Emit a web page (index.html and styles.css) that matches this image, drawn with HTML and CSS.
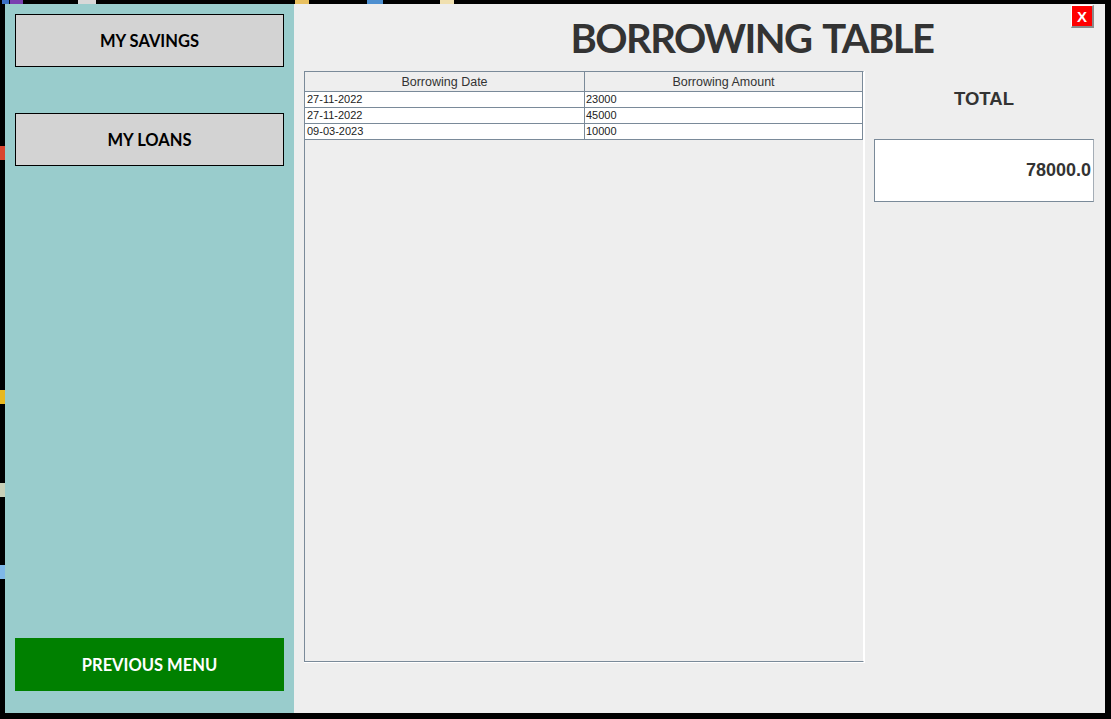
FILE: index.html
```html
<!DOCTYPE html>
<html>
<head>
<meta charset="utf-8">
<link rel="stylesheet" href="styles.css">
</head>
<body>
<div class="desktop">
  <span class="frag f1"></span><span class="frag f2"></span><span class="frag f3"></span>
  <span class="frag f4"></span><span class="frag f5"></span><span class="frag f6"></span>
  <span class="frag f7"></span><span class="frag f8"></span><span class="frag f9"></span>
  <span class="frag f10"></span>
</div>
<div class="window">
  <aside class="sidebar">
    <div class="btn nav">MY SAVINGS</div>
    <div class="btn nav loans">MY LOANS</div>
    <div class="btn prev">PREVIOUS MENU</div>
  </aside>
  <main class="main">
    <header class="header">
      <h1 class="title">BORROWING TABLE</h1>
      <div class="close">X</div>
    </header>
    <div class="content">
      <div class="scroll-outer">
        <div class="scroll">
          <div class="grid">
            <div class="th">Borrowing Date</div>
            <div class="th">Borrowing Amount</div>
            <div class="td">27-11-2022</div>
            <div class="td">23000</div>
            <div class="td">27-11-2022</div>
            <div class="td">45000</div>
            <div class="td">09-03-2023</div>
            <div class="td">10000</div>
          </div>
        </div>
      </div>
      <div class="total-col">
        <div class="total-label">TOTAL</div>
        <div class="total-box">78000.0</div>
      </div>
    </div>
  </main>
</div>
</body>
</html>
```
FILE: styles.css
```css
html, body {
  margin: 0;
  padding: 0;
}
body {
  background: #000;
  width: 1111px;
  height: 719px;
  overflow: hidden;
  position: relative;
  font-family: "Liberation Sans", Arial, sans-serif;
}
.desktop {
  position: absolute;
  inset: 0;
}
.frag {
  position: absolute;
  display: block;
}
.f1 { left: 2px; top: 0; width: 7px; height: 4px; background: #3a6fc4; }
.f2 { left: 10px; top: 0; width: 13px; height: 4px; background: #7a3fb0; }
.f3 { left: 78px; top: 0; width: 18px; height: 4px; background: #d8d8d8; }
.f4 { left: 295px; top: 0; width: 14px; height: 4px; background: #e8c060; }
.f5 { left: 367px; top: 0; width: 16px; height: 4px; background: #4d8fd0; }
.f6 { left: 440px; top: 0; width: 14px; height: 4px; background: #f0e0b0; }
.f7 { left: 0; top: 146px; width: 5px; height: 14px; background: #d9452f; }
.f8 { left: 0; top: 390px; width: 5px; height: 14px; background: #e8b820; }
.f9 { left: 0; top: 483px; width: 5px; height: 14px; background: #c8d0b8; }
.f10 { left: 0; top: 565px; width: 5px; height: 14px; background: #7fb8e8; }

.window {
  position: relative;
  margin: 4px 0 0 5px;
  width: 1100px;
  height: 709px;
  display: flex;
}
.sidebar {
  width: 289px;
  background: #99cccc;
  box-sizing: border-box;
  padding: 10px 10px 22px 10px;
  display: flex;
  flex-direction: column;
}
.btn {
  height: 53px;
  box-sizing: border-box;
  display: flex;
  align-items: center;
  justify-content: center;
  font-family: Lato, "Liberation Sans", sans-serif;
  font-weight: 700;
  font-size: 16.5px;
}
.nav {
  background: #d3d3d3;
  border: 1px solid #000;
  color: #000;
}
.loans {
  margin-top: 46px;
}
.prev {
  margin-top: auto;
  background: #008000;
  color: #fff;
}

.main {
  flex: 1;
  background: #eeeeee;
  position: relative;
  padding-left: 10px;
}
.header {
  height: 67px;
  display: flex;
  align-items: flex-start;
}
.title {
  margin: 0 0 0 200px;
  width: 496px;
  text-align: center;
  font-family: Lato, "Liberation Sans", sans-serif;
  font-weight: 700;
  font-size: 40px;
  letter-spacing: -1.6px;
  word-spacing: 4px;
  line-height: 1;
  padding-top: 14px;
  color: #333333;
}
.close {
  position: absolute;
  top: 1px;
  right: 11px;
  width: 23px;
  height: 23px;
  box-sizing: border-box;
  background: #ff0000;
  color: #fff;
  border-top: 1px solid #ffffff;
  border-left: 1px solid #ffffff;
  border-right: 2px solid #8a8a8a;
  border-bottom: 2px solid #8a8a8a;
  display: flex;
  align-items: center;
  justify-content: center;
  font-weight: 700;
  font-size: 15px;
}
.content {
  display: flex;
  gap: 9px;
}
.scroll-outer {
  width: 561px;
  height: 592px;
  box-sizing: border-box;
  border-right: 1px solid #ffffff;
  border-bottom: 1px solid #ffffff;
}
.scroll {
  height: 100%;
  box-sizing: border-box;
  border-left: 1px solid #7a8a99;
  border-top: 1px solid #7a8a99;
  border-bottom: 1px solid #7a8a99;
  border-right: 1px solid #ffffff;
}
.grid {
  display: grid;
  grid-template-columns: 280px 278px;
}
.th, .td {
  box-sizing: border-box;
  border-right: 1px solid #7a8a99;
  border-bottom: 1px solid #7a8a99;
}
.th {
  height: 20px;
  background: #eeeeee;
  color: #333333;
  font-size: 12.5px;
  text-align: center;
  line-height: 20px;
}
.td {
  height: 16px;
  background: #fff;
  color: #222;
  font-size: 11px;
  line-height: 15px;
  padding-left: 2px;
}
.td:nth-child(even) {
  padding-left: 1px;
}
.total-col {
  width: 220px;
}
.total-label {
  height: 56px;
  line-height: 56px;
  margin-bottom: 12px;
  text-align: center;
  font-weight: 700;
  font-size: 18.5px;
  color: #333333;
}
.total-box {
  height: 63px;
  box-sizing: border-box;
  background: #fff;
  border: 1px solid #7a8a99;
  border-right-color: #a4adb6;
  display: flex;
  align-items: center;
  justify-content: flex-end;
  padding-right: 2px;
  font-weight: 700;
  font-size: 18px;
  color: #333333;
}
```
